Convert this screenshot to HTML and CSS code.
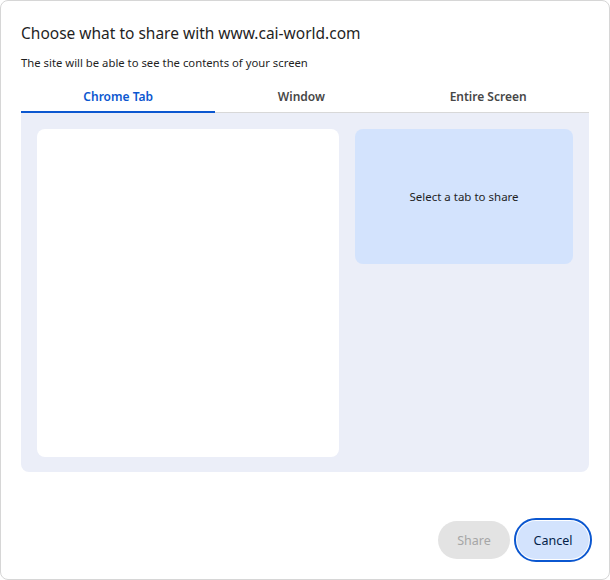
FILE: index.html
```html
<!DOCTYPE html>
<html lang="en">
<head>
<meta charset="utf-8">
<title>Choose what to share</title>
<link rel="stylesheet" href="styles.css">
</head>
<body>
<div class="dialog">
  <div class="header">
    <h1 class="title">Choose what to share with www.cai-world.com</h1>
    <p class="subtitle">The site will be able to see the contents of your screen</p>
  </div>
  <div class="tabs">
    <div class="tab active">Chrome Tab</div>
    <div class="tab">Window</div>
    <div class="tab">Entire Screen</div>
  </div>
  <div class="panel">
    <div class="list"></div>
    <div class="preview">Select a tab to share</div>
  </div>
  <div class="footer">
    <button class="btn btn-share" disabled>Share</button>
    <button class="btn btn-cancel">Cancel</button>
  </div>
</div>
</body>
</html>
```
FILE: styles.css
```css
html, body {
  margin: 0;
  padding: 0;
  background: #ffffff;
}
body {
  font-family: "Noto Sans", "Open Sans", sans-serif;
  color: #1f1f1f;
}
.dialog {
  box-sizing: border-box;
  width: 610px;
  height: 580px;
  border: 1px solid #d6d6d6;
  border-radius: 8px;
  background: #ffffff;
  padding: 0 20px;
  display: flex;
  flex-direction: column;
}
.header {
  padding-top: 22px;
}
.title {
  margin: 0;
  font-size: 15.5px;
  line-height: 20px;
  font-weight: 400;
  color: #1f1f1f;
}
.subtitle {
  margin: 12px 0 0;
  font-size: 11.3px;
  line-height: 16px;
  color: #1f1f1f;
}
.tabs {
  display: flex;
  margin-top: 10px;
  border-bottom: 1px solid #d8d8d8;
}
.tab {
  flex: 1 1 auto;
  text-align: center;
  font-size: 12px;
  font-weight: 600;
  line-height: 16px;
  color: #474747;
  padding: 8px 0 6px;
  border-bottom: 2px solid transparent;
  margin-bottom: -1px;
}
.tab.active {
  color: #0b57d0;
  border-bottom-color: #0b57d0;
}
.panel {
  background: #ebeef8;
  border-radius: 0 0 8px 8px;
  padding: 16px;
  height: 359px;
  box-sizing: border-box;
  display: grid;
  grid-template-columns: 302px 218px;
  column-gap: 16px;
  align-items: start;
}
.list {
  background: #ffffff;
  border-radius: 8px;
  height: 328px;
}
.preview {
  background: #d3e3fd;
  border-radius: 8px;
  height: 135px;
  display: flex;
  align-items: center;
  justify-content: center;
  font-size: 11.5px;
  color: #1f1f1f;
}
.footer {
  display: flex;
  justify-content: flex-end;
  gap: 7px;
  margin-top: 49px;
}
.btn {
  font-family: inherit;
  font-size: 12.5px;
  height: 38px;
  min-width: 72px;
  border: none;
  border-radius: 19px;
  padding: 0 14px;
  cursor: pointer;
}
.btn-share {
  background: #e3e3e3;
  color: #a6a6a6;
}
.btn-cancel {
  background: #d3e3fd;
  color: #041e49;
  outline: 2px solid #0b57d0;
  outline-offset: 1px;
}
```
